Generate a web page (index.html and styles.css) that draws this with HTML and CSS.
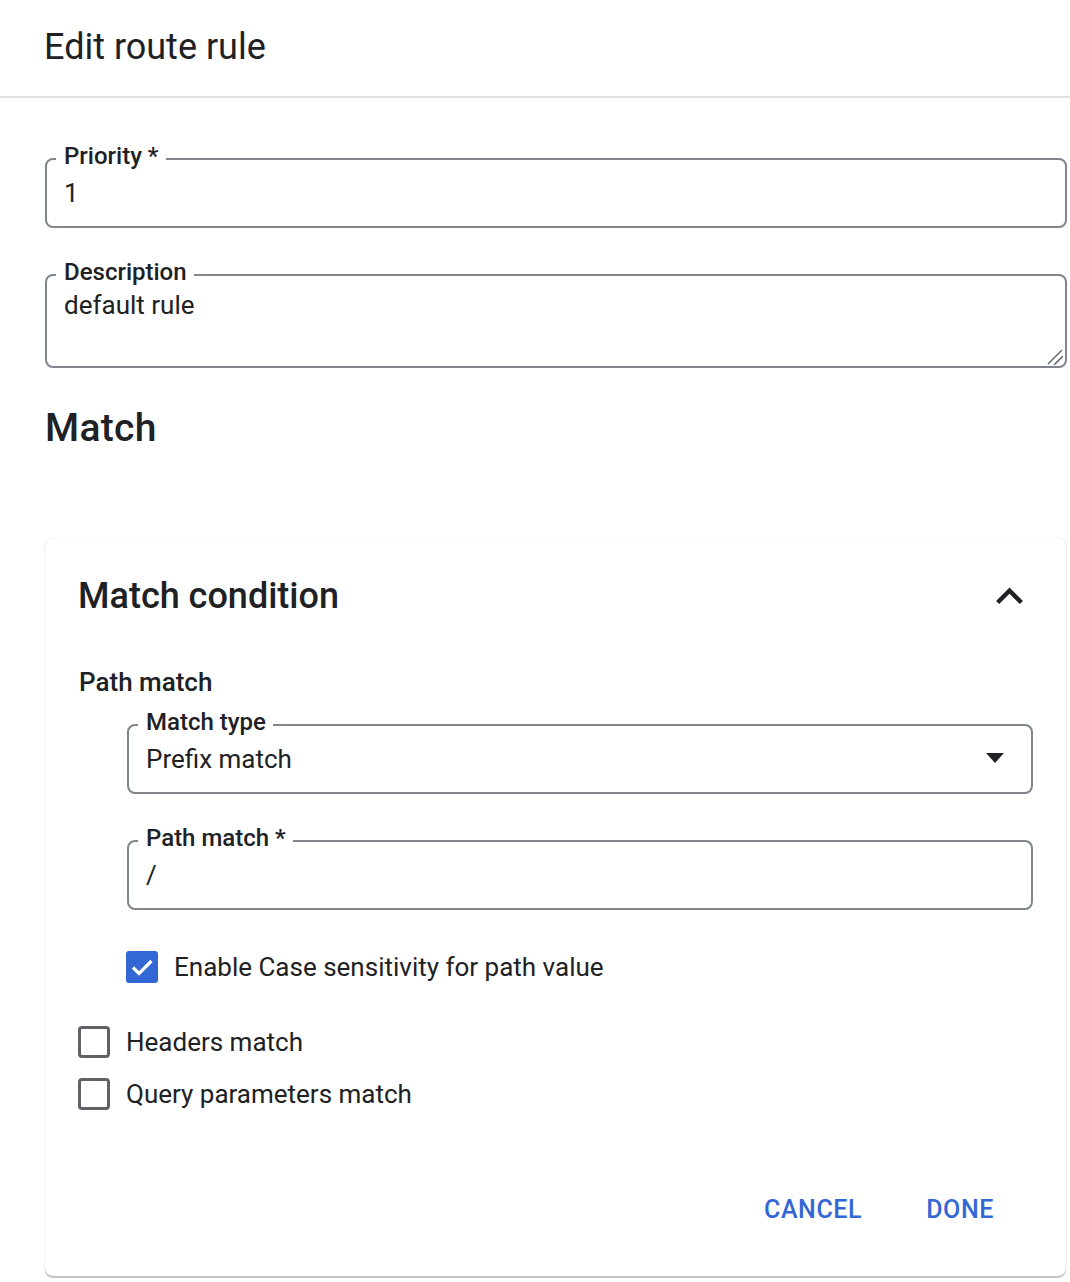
FILE: index.html
```html
<!DOCTYPE html>
<html lang="en">
<head>
<meta charset="utf-8">
<title>Edit route rule</title>
<link rel="stylesheet" href="styles.css">
</head>
<body>
<header class="dlg-header">
  <h1 class="dlg-title">Edit route rule</h1>
</header>
<main class="dlg-body">
  <fieldset class="field">
    <legend class="field-label">Priority *</legend>
    <input class="field-input" type="text" value="1">
  </fieldset>
  <fieldset class="field field--desc">
    <legend class="field-label">Description</legend>
    <textarea class="field-textarea">default rule</textarea>
    <svg class="grip" viewBox="0 0 16 16" width="16" height="16" aria-hidden="true">
      <line x1="1" y1="15" x2="15" y2="1" stroke="#6b6e72" stroke-width="1.6"/>
      <line x1="7" y1="16" x2="16" y2="7" stroke="#6b6e72" stroke-width="1.6"/>
    </svg>
  </fieldset>

  <h2 class="section-title">Match</h2>

  <section class="card">
    <div class="card-head">
      <h3 class="card-title">Match condition</h3>
      <svg class="chevron" viewBox="6 7.8 12 7.8" width="27" height="17.5" aria-hidden="true">
        <path d="M12 8l-6 6 1.41 1.41L12 10.83l4.59 4.58L18 14z" fill="#202124"/>
      </svg>
    </div>

    <h4 class="sub-title">Path match</h4>

    <fieldset class="field field--nested">
      <legend class="field-label">Match type</legend>
      <div class="select-row">
        <span class="select-value">Prefix match</span>
        <span class="select-arrow"></span>
      </div>
    </fieldset>

    <fieldset class="field field--nested field--last">
      <legend class="field-label">Path match *</legend>
      <input class="field-input" type="text" value="/">
    </fieldset>

    <div class="check-row check-row--nested">
      <span class="checkbox checkbox--on">
        <svg viewBox="0 0 32 32" width="32" height="32" aria-hidden="true">
          <polyline points="7,16.5 13,22.5 25.5,10" fill="none" stroke="#fff" stroke-width="3.2"/>
        </svg>
      </span>
      <span class="check-label">Enable Case sensitivity for path value</span>
    </div>

    <div class="check-row check-row--headers">
      <span class="checkbox"></span>
      <span class="check-label">Headers match</span>
    </div>
    <div class="check-row check-row--query">
      <span class="checkbox"></span>
      <span class="check-label">Query parameters match</span>
    </div>

    <div class="actions">
      <button class="btn" type="button">CANCEL</button>
      <button class="btn" type="button">DONE</button>
    </div>
  </section>
</main>
</body>
</html>
```

FILE: styles.css
```css
* { box-sizing: border-box; }

body {
  margin: 0;
  background: #fff;
  color: #202124;
  font-family: Roboto, "Noto Sans", Arial, sans-serif;
}

.dlg-header {
  height: 98px;
  padding: 25px 45px 0 44px;
  border-bottom: 2px solid #e0e0e0;
}

.dlg-title {
  margin: 0;
  font-size: 36px;
  font-weight: 400;
  line-height: 45px;
}

.dlg-body {
  padding: 46px 3px 6px 45px;
}

/* outlined fields */
.field {
  position: relative;
  margin: 0 0 32px;
  padding: 4px 0 17px 9px;
  border: 2px solid #80868b;
  border-radius: 8px;
  min-width: 0;
}

.field-label {
  padding: 0 7px 5px 8px;
  font-size: 24px;
  font-weight: 500;
  line-height: 24px;
  color: #202124;
}

.field-input {
  display: block;
  width: 100%;
  height: 32px;
  margin: 0;
  padding: 0 0 0 8px;
  border: 0;
  outline: none;
  background: transparent;
  color: #202124;
  font-family: inherit;
  font-size: 26px;
  line-height: 32px;
}

.field--desc {
  margin-bottom: 0;
  padding: 0 1px 0 9px;
}

.field-textarea {
  display: block;
  width: 100%;
  height: 77px;
  margin: 0;
  padding: 0 0 0 8px;
  border: 0;
  outline: none;
  background: transparent;
  color: #202124;
  font-family: inherit;
  font-size: 26px;
  line-height: 32px;
  resize: none;
}

.grip {
  position: absolute;
  right: 2px;
  bottom: 1px;
  display: block;
}

.section-title {
  margin: 38px 0 88px;
  font-size: 39px;
  font-weight: 500;
  line-height: 44px;
  letter-spacing: 0.3px;
}

/* card */
.card {
  margin-right: 1px;
  padding: 36px 33px 33px 34px;
  border-radius: 8px;
  background: #fff;
  box-shadow: 0 0 1px rgba(60, 64, 67, 0.35), 0 2px 1px rgba(60, 64, 67, 0.3);
}

.card-head {
  display: flex;
  align-items: center;
  justify-content: space-between;
}

.card-title {
  margin: 0 0 0 -1px;
  font-size: 36px;
  font-weight: 500;
  line-height: 44px;
}

.chevron {
  display: block;
  margin-right: 10px;
}

.sub-title {
  margin: 48px 0 12px;
  font-size: 26px;
  font-weight: 500;
  line-height: 32px;
}

.field--nested {
  margin-left: 48px;
}

.field--last {
  margin-bottom: 0;
}

.select-row {
  display: flex;
  align-items: center;
  justify-content: space-between;
  height: 32px;
  padding: 0 27px 0 8px;
}

.select-value {
  font-size: 26px;
  line-height: 32px;
}

.select-arrow {
  width: 0;
  height: 0;
  margin-top: -3px;
  border-left: 9.5px solid transparent;
  border-right: 9.5px solid transparent;
  border-top: 10px solid #202124;
}

/* checkboxes */
.check-row {
  display: flex;
  align-items: center;
  gap: 17px;
  height: 40px;
}

.check-row--nested {
  margin: 37px 0 0 47px;
}

.check-row--headers {
  margin: 35px 0 0 -1px;
}

.check-row--query {
  margin: 12px 0 0 -1px;
}

.checkbox {
  flex: none;
  width: 32px;
  height: 32px;
  border: 3px solid #5f6368;
  border-radius: 4px;
}

.checkbox--on {
  border: 0;
  border-radius: 3px;
  background: #3367d6;
}

.checkbox--on svg {
  display: block;
}

.check-label {
  margin-left: -1px;
  font-size: 26px;
  line-height: 32px;
  color: #202124;
}

/* actions */
.actions {
  display: flex;
  justify-content: flex-end;
  gap: 32px;
  margin: 63px 23px 0 0;
}

.btn {
  height: 66px;
  padding: 0 16px;
  border: 0;
  background: transparent;
  color: #3367d6;
  font-family: inherit;
  font-size: 25px;
  font-weight: 500;
  line-height: 66px;
  letter-spacing: 0.6px;
}
```
